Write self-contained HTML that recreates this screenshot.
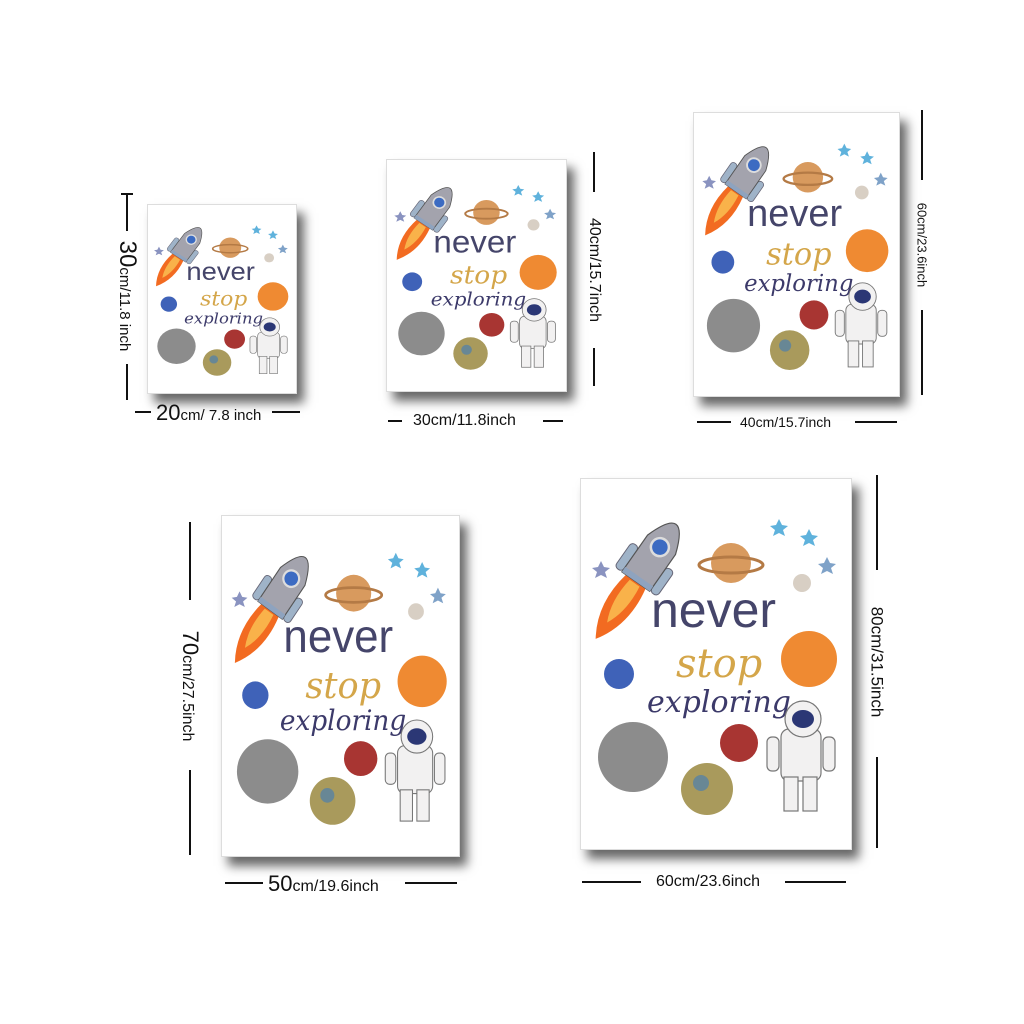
<!DOCTYPE html>
<html><head><meta charset="utf-8"><style>
html,body{margin:0;padding:0;background:#fff;width:1024px;height:1024px;overflow:hidden;position:relative;font-family:"Liberation Sans",sans-serif;color:#111}
.p{position:absolute;background:#fff;box-shadow:7px 9px 10px rgba(0,0,0,.6);border:1px solid #ddd}
.p svg{display:block;width:100%;height:100%}
.h{position:absolute;height:2px;background:#111}
.v{position:absolute;width:2px;background:#111}
.t{position:absolute;white-space:nowrap;line-height:1}
.r{transform:translate(-50%,-50%) rotate(90deg);}
</style></head><body>
<div class="p" style="left:147px;top:204px;width:148px;height:188px"><svg viewBox="0 0 270 370" preserveAspectRatio="none">
<g id="art">
<g transform="translate(72,78) rotate(35)">
<path d="M-12 30 Q-20 70 0 100 Q20 70 12 30 Z" fill="#f26b21"/>
<path d="M-6 32 Q-10 60 0 80 Q10 60 6 32 Z" fill="#f9b24a"/>
<rect x="-26" y="0" width="9" height="30" rx="4" fill="#9fb3c8" stroke="#667" stroke-width="1"/>
<rect x="17" y="0" width="9" height="30" rx="4" fill="#9fb3c8" stroke="#667" stroke-width="1"/>
<path d="M-17 30 L-17 -15 Q0 -65 17 -15 L17 30 Z" fill="#a3a3ad" stroke="#555" stroke-width="1.2"/>
<rect x="-17" y="24" width="34" height="6" fill="#8ea3bf"/>
<circle cx="0" cy="-12" r="9" fill="#3c6bc2" stroke="#ddd" stroke-width="2.5"/>
</g>
<path d="M20 82 l3 6 6 1 -5 4 2 6 -6 -3 -6 3 2 -6 -5 -4 6 -1z" fill="#8a93c0"/>
<ellipse cx="150" cy="84" rx="20" ry="20" fill="#d89a5e"/><ellipse cx="150" cy="86" rx="32" ry="8" fill="none" stroke="#b47a45" stroke-width="3"/>
<circle cx="221" cy="104" r="9" fill="#d8cfc4"/>
<path d="M198 40 l3 6 6 1 -5 4 2 6 -6 -3 -6 3 2 -6 -5 -4 6 -1z" fill="#5fb2dc"/>
<path d="M228 50 l3 6 6 1 -5 4 2 6 -6 -3 -6 3 2 -6 -5 -4 6 -1z" fill="#5fb2dc"/>
<path d="M246 78 l3 6 6 1 -5 4 2 6 -6 -3 -6 3 2 -6 -5 -4 6 -1z" fill="#7fa2c8"/>
<text x="70" y="148" font-family="Liberation Sans" font-size="50" fill="#45456a">never</text>
<text x="95" y="198" font-family="DejaVu Serif" font-style="italic" font-size="40" fill="#d4a64a">stop</text>
<text x="66" y="233" font-family="DejaVu Serif" font-style="italic" font-size="30" fill="#3c3a6a">exploring</text>
<circle cx="228" cy="180" r="28" fill="#ef8a32"/>
<circle cx="38" cy="195" r="15" fill="#3f62b8"/>
<circle cx="52" cy="278" r="35" fill="#8c8c8c"/>
<circle cx="158" cy="264" r="19" fill="#a83532"/>
<circle cx="126" cy="310" r="26" fill="#a99a5c"/><circle cx="120" cy="304" r="8" fill="#4d7fae" opacity=".7"/>
<g fill="#f2f1f1" stroke="#777" stroke-width="1.2"><rect x="200" y="250" width="40" height="52" rx="8"/><rect x="203" y="298" width="14" height="34"/><rect x="222" y="298" width="14" height="34"/><rect x="186" y="258" width="12" height="34" rx="5"/><rect x="242" y="258" width="12" height="34" rx="5"/><circle cx="222" cy="240" r="18"/></g>
<ellipse cx="222" cy="240" rx="11" ry="9" fill="#2b3775"/>
</g></svg></div>

<div class="p" style="left:386px;top:159px;width:179px;height:231px"><svg viewBox="0 0 270 370" preserveAspectRatio="none"><use href="#art"/></svg></div>
<div class="p" style="left:693px;top:112px;width:205px;height:283px"><svg viewBox="0 0 270 370" preserveAspectRatio="none"><use href="#art"/></svg></div>
<div class="p" style="left:221px;top:515px;width:237px;height:340px"><svg viewBox="0 0 270 370" preserveAspectRatio="none"><use href="#art"/></svg></div>
<div class="p" style="left:580px;top:478px;width:270px;height:370px"><svg viewBox="0 0 270 370" preserveAspectRatio="none"><use href="#art"/></svg></div>

<div class="v" style="left:126px;top:193px;height:38px"></div>
<div class="v" style="left:126px;top:364px;height:36px"></div>
<div class="h" style="left:121px;top:193px;width:12px"></div>
<div class="t r" style="left:127px;top:296px;font-size:15px"><span style="font-size:24px">30</span>cm/11.8 inch</div>
<div class="h" style="left:135px;top:411px;width:16px"></div>
<div class="h" style="left:272px;top:411px;width:28px"></div>
<div class="t" style="left:156px;top:402px;font-size:15px"><span style="font-size:22px">20</span>cm/ 7.8 inch</div>
<div class="v" style="left:593px;top:152px;height:40px"></div>
<div class="v" style="left:593px;top:348px;height:38px"></div>
<div class="t r" style="left:594px;top:270px;font-size:16px">40cm/15.7inch</div>
<div class="h" style="left:388px;top:420px;width:14px"></div>
<div class="h" style="left:543px;top:420px;width:20px"></div>
<div class="t" style="left:413px;top:413px;font-size:16px">30cm/11.8inch</div>
<div class="v" style="left:921px;top:110px;height:70px"></div>
<div class="v" style="left:921px;top:310px;height:85px"></div>
<div class="t r" style="left:922px;top:245px;font-size:13px">60cm/23.6inch</div>
<div class="h" style="left:697px;top:421px;width:34px"></div>
<div class="h" style="left:855px;top:421px;width:42px"></div>
<div class="t" style="left:740px;top:415px;font-size:14px">40cm/15.7inch</div>
<div class="v" style="left:189px;top:522px;height:78px"></div>
<div class="v" style="left:189px;top:770px;height:85px"></div>
<div class="t r" style="left:190px;top:686px;font-size:16px"><span style="font-size:22px">70</span>cm/27.5inch</div>
<div class="h" style="left:225px;top:882px;width:38px"></div>
<div class="h" style="left:405px;top:882px;width:52px"></div>
<div class="t" style="left:268px;top:873px;font-size:16px"><span style="font-size:22px">50</span>cm/19.6inch</div>
<div class="v" style="left:876px;top:475px;height:95px"></div>
<div class="v" style="left:876px;top:757px;height:91px"></div>
<div class="t r" style="left:877px;top:662px;font-size:17px">80cm/31.5inch</div>
<div class="h" style="left:582px;top:881px;width:59px"></div>
<div class="h" style="left:785px;top:881px;width:61px"></div>
<div class="t" style="left:656px;top:874px;font-size:16px">60cm/23.6inch</div>
</body></html>
